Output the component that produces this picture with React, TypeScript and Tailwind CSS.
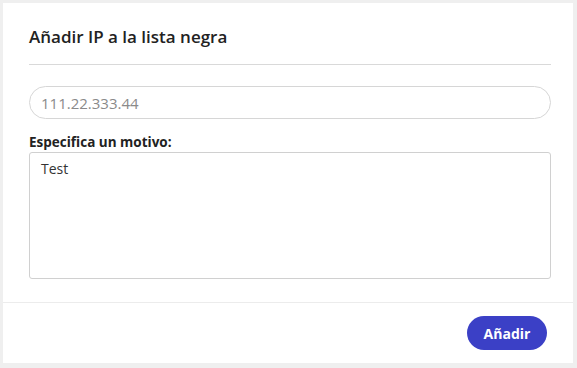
export default function App() {
  return (
    <div className="h-[368px] w-[577px] bg-[#efefef] pl-[3px] pt-[3px] font-['Open_Sans','Liberation_Sans',sans-serif]">
      <div className="flex h-[360px] w-[570px] flex-col bg-white">
        <div className="pl-[26px] pr-[22px]">
          <div className="border-b border-[#d9d9d9] pb-[15px] pt-[22px]">
            <h2 className="text-[17px] font-semibold leading-[24px] text-[#222]">
              Añadir IP a la lista negra
            </h2>
          </div>
          <input
            className="mt-[21px] h-[33px] w-full rounded-full border border-[#d6d6d6] px-[11px] text-[15px] text-[#333] outline-none placeholder:text-[#8a8a8a]"
            placeholder="111.22.333.44"
          />
          <label className="mt-[14px] block text-[13.5px] font-bold leading-[18px] text-[#222]">
            Especifica un motivo:
          </label>
          <textarea
            className="mt-px block h-[127px] w-full resize-none rounded-[3px] border border-[#d0d0d0] px-[11px] py-[5px] text-[14px] text-[#333] outline-none"
            defaultValue="Test"
          />
        </div>
        <div className="mt-auto flex h-[61px] items-center justify-end border-t border-[#ececec] px-[26px]">
          <button className="h-[34px] w-[80px] rounded-full bg-[#3b40c6] text-[14px] font-bold text-white">
            Añadir
          </button>
        </div>
      </div>
    </div>
  );
}
